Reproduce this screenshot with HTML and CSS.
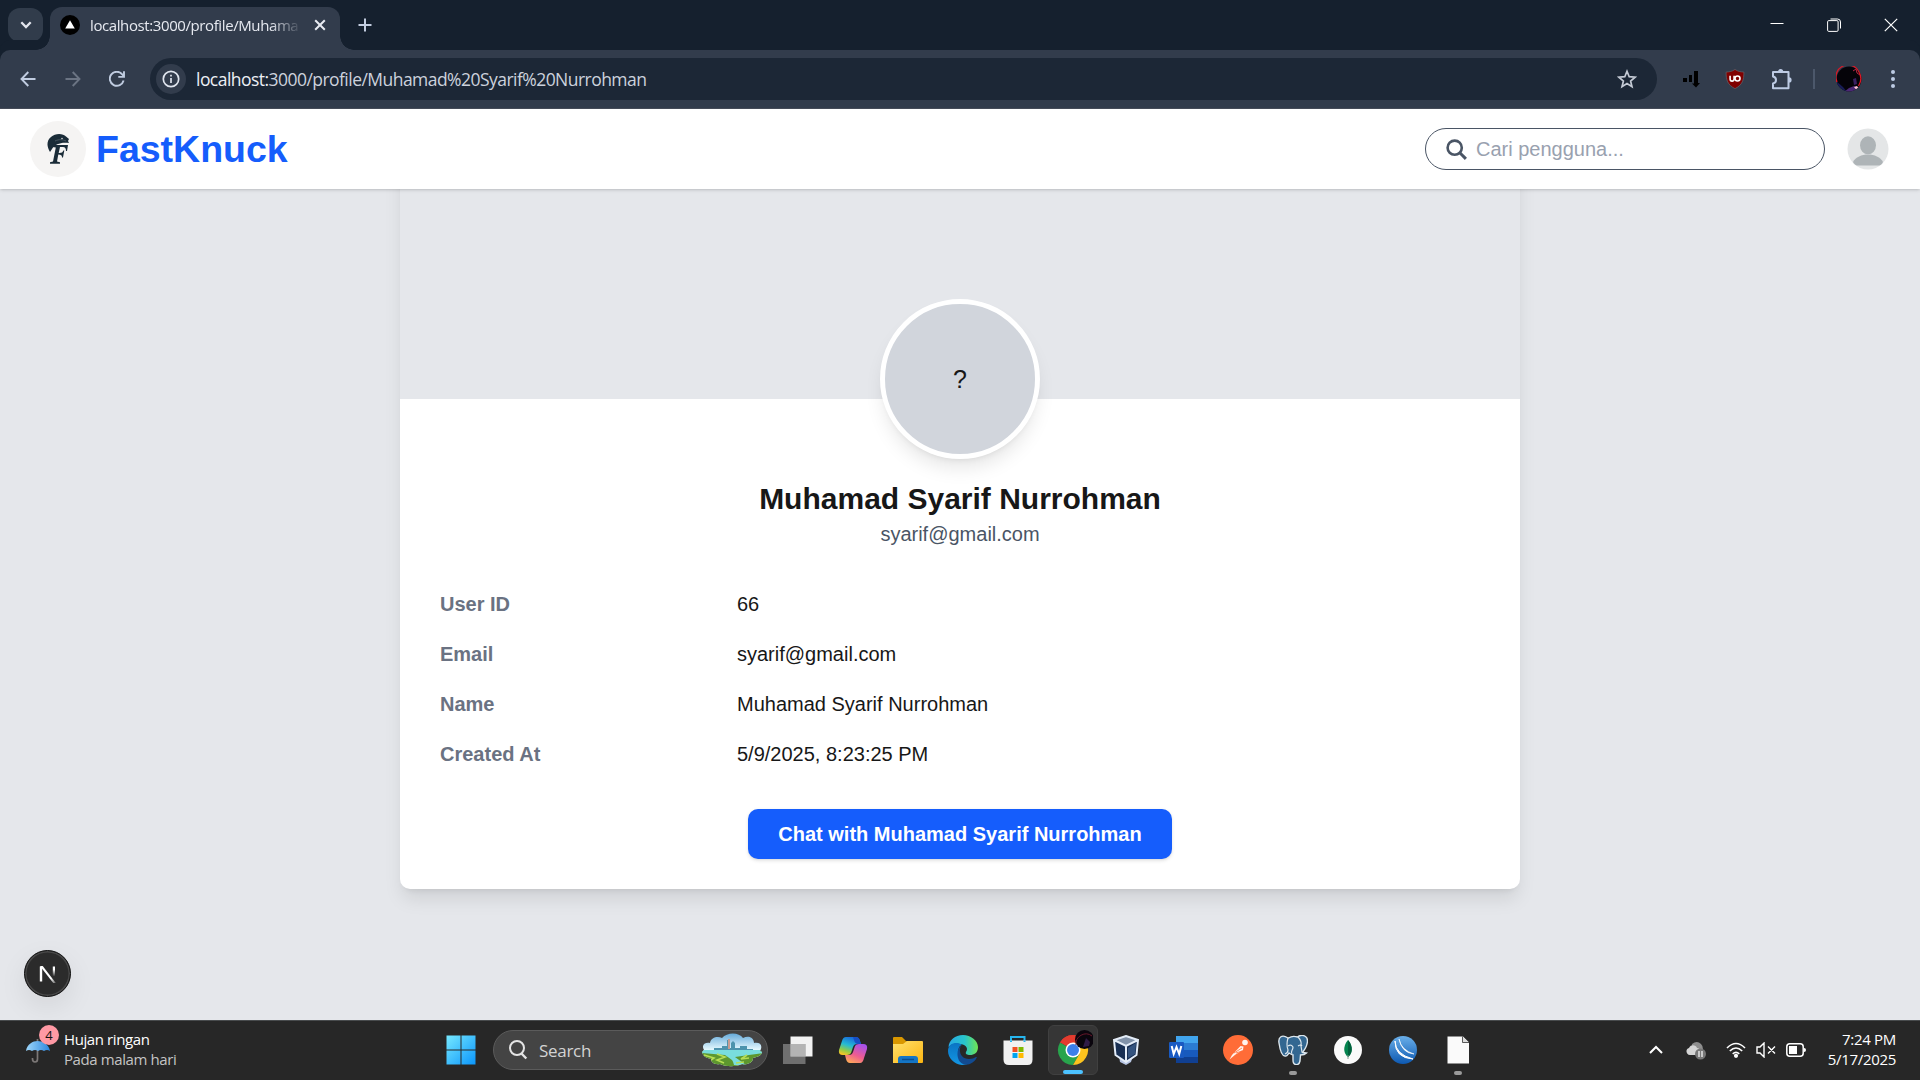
FILE: index.html
```html
<!DOCTYPE html>
<html lang="id">
<head>
<meta charset="utf-8">
<title>FastKnuck</title>
<link rel="stylesheet" href="styles.css">
</head>
<body>
<div class="screen">
  <div class="tabstrip">
    <div class="tab-menu"><svg width="14" height="14" viewBox="0 0 14 14" fill="none" stroke="#e3e6ee" stroke-width="2.3"><path d="M2.3 4.3 7 9l4.700-4.700"/></svg></div>
    <div class="tab">
      <svg class="favicon" width="20" height="20" viewBox="0 0 20 20"><circle cx="10" cy="10" r="10"/><path d="M10 5.200 14.800 13.500H5.200z" fill="#fff"/></svg>
      <span class="tab-title">localhost:3000/profile/Muhama</span>
      <svg width="12" height="12" viewBox="0 0 12 12" stroke="#e8ebf2" stroke-width="2"><path d="m1.200 1.200 9.600 9.600m0-9.600-9.600 9.600"/></svg>
    </div>
    <svg class="new-tab" width="14" height="14" viewBox="0 0 14 14" stroke="#c3cde0" stroke-width="2"><path d="M7 .5v13M.5 7h13"/></svg>
    <div class="window-buttons">
      <svg width="14" height="14" viewBox="0 0 14 14" stroke="#fff"><path d="M.5 5.500h13"/></svg>
      <svg width="14" height="14" viewBox="0 0 14 14" fill="none" stroke="#fff"><path d="M3.500 1h7q3 0 3 3v6.500" /><rect x=".6" y="2.600" width="10.500" height="10.800" rx="1.200"/></svg>
      <svg width="14" height="14" viewBox="0 0 14 14" stroke="#fff" stroke-width="1.200"><path d="m.8.8 12.400 12.400m0-12.400L.8 13.200"/></svg>
    </div>
  </div>
  <div class="toolbar">
    <div class="nav-buttons">
      <svg width="16" height="16" viewBox="0 0 16 16" fill="none" stroke="#c0cce0" stroke-width="1.900"><path d="M15.500 8H2M8.300 1 1.500 8l6.800 7"/></svg>
      <svg width="16" height="16" viewBox="0 0 16 16" fill="none" stroke="#6b7483" stroke-width="1.900"><path d="M.5 8H14M7.700 1l6.800 7-6.800 7"/></svg>
      <svg width="16" height="16" viewBox="0 0 16 16" fill="none" stroke="#c0cce0" stroke-width="1.900"><path d="M14.600 9.500A7 7 0 1 1 13.200 3.300L15 5.500M15 .3v5.600H9.300"/></svg>
    </div>
    <div class="omnibox">
      <div class="site-info"><svg width="18" height="18" viewBox="0 0 18 18" fill="none" stroke="#e0e5ee" stroke-width="1.700"><circle cx="9" cy="9" r="7.700"/><path d="M9 8v5M9 4.700v1.900"/></svg></div>
      <span class="url"><b>localhost:</b>3000/profile/Muhamad%20Syarif%20Nurrohman</span>
      <svg width="20" height="20" viewBox="0 0 20 20" fill="none" stroke="#c4cad5" stroke-width="1.700"><path d="m10 2.300 2.200 5.400 5.900.5-4.500 3.800 1.400 5.700-5-3.100-5 3.100 1.400-5.700-4.500-3.800 5.900-.5z"/></svg>
    </div>
    <div class="extensions">
      <svg width="18" height="18" viewBox="0 0 18 18"><path d="M1 8h4v4H1zM7 5h3v7H7zM12 1h4v12h2l-4 4.500-4-4h2z"/></svg>
      <svg width="20" height="20" viewBox="0 0 20 20"><path d="M10 .4c3 2.200 5.500 2.400 8.900 2.700 0 8-1.300 12.500-8.900 16.600C2.400 15.600 1.100 11.100 1.100 3.100 4.500 2.800 7 2.600 10 .4z" fill="#800000" stroke="#64616a" stroke-width=".7"/><path d="M5.100 6.700v3.200c0 3 4 3 4 0V6.700" fill="none" stroke="#fff" stroke-width="1.600"/><circle cx="12.500" cy="9.500" r="2.500" fill="none" stroke="#fff" stroke-width="1.600"/></svg>
      <svg width="21" height="21" viewBox="0 0 21 21"><path d="M2 3h15.500v16.300H2v-4.800q3-.7 3-3.500T2 7.500z" fill="none" stroke="#bdcbe4" stroke-width="2" stroke-linejoin="round"/><path d="M7 2.700a2.600 2.600 0 0 1 5.200 0zM18 8.300a2.600 2.600 0 0 1 0 5.200z" fill="#bdcbe4"/></svg>
      <i class="divider"></i>
      <svg width="26" height="26" viewBox="0 0 26 26"><defs><clipPath id="pc"><circle cx="13" cy="13" r="12.500"/></clipPath></defs><g clip-path="url(#pc)"><path d="M0 0h26v26H0z" fill="#050309"/><path d="M0 15 7 21l4 5H0z" fill="#171b55"/><path d="m8 26 5-4 5-2 6 2-5 4z" fill="#4b2874"/><path d="m17 13 3-1 1 6-3 1z" fill="#3a2061"/><path d="m18 21 3-1 1.500 2-2 2z" fill="#ffc4d5"/><path d="m17 5 3-2 1 4 3 2" stroke="#b42845" fill="none"/></g><path d="M1 16A12 12 0 0 1 23 6q4 7-.5 14" stroke="#dc1724" stroke-width="1.300" fill="none"/></svg>
      <svg width="6" height="20" viewBox="0 0 6 20" fill="#bdcbe4"><circle cx="3" cy="3" r="2"/><circle cx="3" cy="10" r="2"/><circle cx="3" cy="17" r="2"/></svg>
    </div>
  </div>

  <div class="page">
    <header class="site-header">
      <div class="brand">
        <svg width="56" height="56" viewBox="0 0 56 56"><circle cx="28" cy="28" r="28" fill="#f5f4f3"/><path d="M20 31c-3-5-4-11 1-15 4-4 12-4 15-.5l3 2.500-1 2 1 2c-8-1-14 1-17 6z" fill="#1a2c38"/><path d="M25 20c4-2 8-1.500 11 0" fill="none" stroke="#53616a" stroke-width=".8"/><circle cx="32" cy="17.500" r=".7" fill="#fff"/><path d="M23 24h15l-1 6h-1q0-4-3-4h-3l-1.300 6q4 .3 4.600-2.500h1l-1.300 7h-1q.3-3-3.700-3l-1.300 7 3 .7v1.500H20v-1.500l3-.7 2.800-14-3-.5z" fill="#1a2c38"/></svg>
        <span class="brand-name">FastKnuck</span>
      </div>
      <div class="header-tools">
        <div class="search"><svg width="21" height="21" viewBox="0 0 21 21" fill="none" stroke="#4a5565"><circle cx="8.700" cy="8.700" r="7.100" stroke-width="2.600"/><path d="m13.800 13.800 6.100 6.100" stroke-width="3"/></svg><span>Cari pengguna...</span></div>
        <svg width="42" height="42" viewBox="0 0 42 42"><circle cx="21" cy="21" r="20.500" fill="#e4e6e7"/><ellipse cx="21" cy="17.300" rx="8" ry="9" fill="#aeb4b7"/><path d="M6 34c5-10 25-10 30 0-1 2.500-3 3.500-4 3.500H10C8 37 7 36 6 34z" fill="#aeb4b7"/></svg>
      </div>
    </header>
    <main class="card">
      <div class="cover"></div>
      <div class="avatar">?</div>
      <h1 class="name">Muhamad Syarif Nurrohman</h1>
      <p class="email">syarif@gmail.com</p>
      <dl class="details">
        <dt>User ID</dt><dd>66</dd>
        <dt>Email</dt><dd>syarif@gmail.com</dd>
        <dt>Name</dt><dd>Muhamad Syarif Nurrohman</dd>
        <dt>Created At</dt><dd>5/9/2025, 8:23:25 PM</dd>
      </dl>
      <button class="chat">Chat with Muhamad Syarif Nurrohman</button>
    </main>
    <div class="dev-badge"><svg width="18" height="18" viewBox="0 0 18 18"><defs><linearGradient id="n1" x1="0" y1="0" x2="0" y2="1"><stop offset=".3" stop-color="#fff"/><stop offset="1" stop-color="#fff" stop-opacity="0"/></linearGradient><linearGradient id="n2" x1="0" y1="0" x2="1" y2="1"><stop offset=".7" stop-color="#fff"/><stop offset="1" stop-color="#fff" stop-opacity=".2"/></linearGradient></defs><path d="M2 1.500v15" stroke="#fff" stroke-width="2.400"/><path d="M1 1h2.700l13.100 17-1.900.8L2.500 3z" fill="url(#n2)"/><path d="M13.800 1.500h2.200v10h-2.200z" fill="url(#n1)"/></svg></div>
  </div>

  <div class="taskbar">
    <div class="weather">
      <div class="weather-icon">
        <svg width="26" height="26" viewBox="0 0 26 26"><defs><linearGradient id="um"><stop stop-color="#9ed7fb"/><stop offset="1" stop-color="#2c86de"/></linearGradient></defs><path d="M12.500 1v20q0 3-2.500 3t-2.500-3v-1" fill="none" stroke="#7c7877" stroke-width="1.700"/><path d="M1 13C2 6 8 3 12.500 3S24 6 25 13q-3-2-6 0-3-2-6 0-3-2-6 0-3-2-6 0z" fill="url(#um)"/></svg>
        <span class="badge">4</span>
      </div>
      <div class="weather-text"><span>Hujan ringan</span><span class="dim">Pada malam hari</span></div>
    </div>
    <div class="apps">
      <div class="app"><svg width="30" height="30" viewBox="0 0 30 30"><defs><linearGradient id="w" gradientUnits="userSpaceOnUse" x2="30" y2="30"><stop stop-color="#78eaff"/><stop offset="1" stop-color="#0994fb"/></linearGradient></defs><path d="M.5.5h14v14H.5zM15.500.5h14v14h-14zM.5 15.500h14v14H.5zM15.500 15.500h14v14h-14z" fill="url(#w)"/></svg></div>
      <div class="task-search">
        <svg width="20" height="20" viewBox="0 0 20 20" fill="none" stroke="#e5e5e5" stroke-width="2"><circle cx="9" cy="8" r="7"/><path d="m13 13 5.300 5.500" stroke-width="2.400"/></svg>
        <span>Search</span>
        <svg class="scene" width="62" height="34" viewBox="0 0 62 34"><defs><clipPath id="sc"><path d="M3 17C0 12 4 9 9 10 10 4 17 3 21 5c5-6 17-6 21 0 6-3 11 0 11 5 7-1 9 3 6 8l2 1c0 3-4 5-9 6 0 5-6 7-11 6-6 3-16 3-22 0-6 1-9-2-9-5-5-1-8-3-9-7z"/></clipPath><linearGradient id="sky" x2="0" y2="1"><stop stop-color="#62a8d8"/><stop offset=".5" stop-color="#e8faff"/></linearGradient></defs><g clip-path="url(#sc)"><path d="M0 0h62v34H0z" fill="url(#sky)"/><path d="M13 18v-3h8v-2h5V7h2v8h2v-5l2-2 2 2v5h5v-2h7v3h6v3z" fill="#4d93ad"/><path d="M27 6h2v10h-2z" fill="#c59b91"/><path d="M0 18h62v16H0z" fill="#5d972e"/><path d="M0 17h62v3L48 22l-14 2 11 8H33q-1-4-2-5l-7-5-24-2z" fill="#79dddd"/><path d="m3 22 10 3-3 2m6-6 8 3-8 3 7 3m23-8-6 4 8-1m-5 4-8 1" stroke="#b5dd54" fill="none" stroke-width="1.600"/></g></svg>
      </div>
      <div class="app"><svg width="32" height="30" viewBox="0 0 32 30"><path d="M8.500 1.500h22v20h-22z" fill="#f2f2f2"/><path d="M1 9h22.500v20H1z" fill="#888" opacity=".75"/><path d="M8.500 9h15v12.500h-15z" fill="#b4b4b4"/></svg></div>
      <div class="app"><svg width="30" height="30" viewBox="0 0 30 30"><defs><linearGradient id="c1" x1=".6" x2=".2" y2="1"><stop stop-color="#1867dc"/><stop offset=".45" stop-color="#25bbd4"/><stop offset=".75" stop-color="#91cc48"/><stop offset="1" stop-color="#ffc524"/></linearGradient><linearGradient id="c2" x1=".7" x2=".2" y2="1"><stop stop-color="#a651ea"/><stop offset=".55" stop-color="#ee5c91"/><stop offset="1" stop-color="#ffac56"/></linearGradient></defs><path d="M8 2h10q3 0 4 4l1 3h-4q-3 0-4 3l-2 6q-1 2-4 2H5q-5 0-4-5L4 6q1-4 4-4z" fill="url(#c1)"/><path d="M22 28H12q-3 0-4-4l-1-4h4q3 0 4-3l2-6q1-2 4-2h4q5 0 4 5l-3 9q-1 5-4 5z" fill="url(#c2)"/><path d="M15 2h3q3 0 4 4l1 3h-3q-3 0-4-4z" fill="#174fc5"/></svg></div>
      <div class="app"><svg width="30" height="30" viewBox="0 0 30 30"><defs><linearGradient id="f" x2="1" y2="1"><stop stop-color="#ffe16d"/><stop offset="1" stop-color="#fcb511"/></linearGradient></defs><path d="M0 3q0-1 1-1h8l4 4h6v6H0z" fill="#d99700"/><path d="M0 9h10l4-3h15q1 0 1 1v20q0 1-1 1H0z" fill="url(#f)"/><path d="M5 28v-4q0-3 3-3h14q3 0 3 3v4z" fill="#1475c5"/><path d="M9 24.500h12" stroke="#084d91" stroke-width="1.500"/></svg></div>
      <div class="app"><svg width="30" height="30" viewBox="0 0 30 30"><defs><linearGradient id="e1"><stop stop-color="#28a9e5"/><stop offset=".55" stop-color="#28c4cb"/><stop offset="1" stop-color="#70e552"/></linearGradient><linearGradient id="e2" x2="0" y2="1"><stop stop-color="#0a74c4"/><stop offset="1" stop-color="#1397e4"/></linearGradient></defs><path d="M.5 12C1 5 7 0 15 0s15 6 15 12c0 6-4 8-8 8-3 0-5-1-4-3 3-4-1-8-6-8-5-1-9 0-11.500 3z" fill="url(#e1)"/><path d="M0 16C0 8 9 6 14 10c-4 1-5 7-2 12 2 4 7 5 11 4-3 3-6 4-9 4C6 29 0 23 0 16z" fill="url(#e2)"/><path d="M13 11c-3 5 0 13 8 13 3 0 5-1 7-2 1 0 1 0 .5 1C26 28 20 31 15 29 8 26 8 14 13 11z" fill="#124b91"/></svg></div>
      <div class="app"><svg width="30" height="30" viewBox="0 0 30 30"><path d="M8 6.500V2h13.500v4.500" fill="none" stroke="#26b6ee" stroke-width="2"/><path d="M.5 5.500h29v19q0 5.500-5 5.500H6q-5.500 0-5.500-5.500z" fill="#f1f1f1"/><path d="M8 5.500V7M21.500 5.500V7" stroke="#26b6ee" stroke-width="2"/><path d="M9.500 12h5v5h-5z" fill="#f25022"/><path d="M15.500 12h5v5h-5z" fill="#7fba00"/><path d="M9.500 18h5v5h-5z" fill="#00a4ef"/><path d="M15.500 18h5v5h-5z" fill="#ffb900"/></svg></div>
      <div class="app active"><svg width="40" height="40" viewBox="0 0 40 40"><path d="M20 20 7 12.500A15 15 0 0 1 33 12.500z" fill="#e33b2e"/><path d="M20 20 7 12.500A15 15 0 0 0 20 35l6.500-11z" fill="#28a44c"/><path d="M20 20l6.500 3.800L20 35a15 15 0 0 0 13-22.500H20z" fill="#fcc31e"/><path d="M7 12.500A15 15 0 0 1 33 12.500H20z" fill="#e33b2e"/><circle cx="20" cy="20" r="7.500" fill="#fff"/><circle cx="20" cy="20" r="6" fill="#3c7fe9"/><circle cx="31.500" cy="9.500" r="9.500" fill="#0a050d"/><path d="M23 15a10 10 0 0 1 16-9" stroke="#68172a" fill="none"/><path d="m30 17 3-9 4 4-1 4z" fill="#2f1b46"/></svg></div>
      <div class="app vm"><svg width="30" height="30" viewBox="0 0 30 30"><path d="m8 21 7-2 7 2-2 6-5 3-6-3z" fill="#b6c4e2"/><path d="M3 5 15 1l12 4-1.500 15L15 27 4.500 20z" fill="#182f53"/><path d="m3 5 12-4 12 4-12 6z" fill="#8293aa"/><path d="m3 5 12 6 12-6M15 11v16M3 5l1.500 15L15 27l10.500-7L27 5 15 1z" fill="none" stroke="#e4edf8" stroke-width="2"/><path d="m17 13 8-5-1 11-7 4z" fill="#35547f"/></svg></div>
      <div class="app"><svg width="30" height="30" viewBox="0 0 30 30"><path d="M8 1h22v7H8z" fill="#41a5ee"/><path d="M8 8h22v7H8z" fill="#2b7cd3"/><path d="M8 15h22v7H8z" fill="#185abd"/><path d="M8 22h22v6H8z" fill="#103f91"/><rect x="1" y="7" width="15" height="16" rx="1" fill="#195ac2"/><path d="m3.700 11 2 8 2.800-7 2.700 7 2.100-8" fill="none" stroke="#fff" stroke-width="2"/></svg></div>
      <div class="app"><svg width="30" height="30" viewBox="0 0 30 30"><circle cx="15" cy="15" r="15" fill="#ff6c37"/><circle cx="22" cy="7.500" r="2.800" fill="#fff3ed"/><path d="m6.500 24.500 2.500-4.500 8.500-9 3 .500-.5 3.500-7.500 4.500z" fill="#fff3ed"/><path d="m11 18 8-5m-6 5 6-2" stroke="#ff6c37" stroke-width=".8"/></svg></div>
      <div class="app running"><svg width="30" height="30" viewBox="0 0 30 30"><path d="M10 3C4-1 0 2 1 8c1 7 3 13 6 13 2 1 3-2 4-3q3 2 4 2v5c0 6 6 6 7 1l.500-6q4 0 6-2l-4-.500c6-8 6-14 3-16-3-2-6-1-8 .500-3-1-6-1-9 1z" fill="#336791" stroke="#dce6ed" stroke-width="1.400"/><path d="M10 3q-2 7 0 12 0 3-3 4M10 11q3-2 5 1c0 4-3 4-1 7M20 2q4 4 3 9l1 6M20 11q3-2 4 0" fill="none" stroke="#dce6ed" stroke-width="1.200"/></svg></div>
      <div class="app"><svg width="30" height="30" viewBox="0 0 30 30"><circle cx="15" cy="15" r="14" fill="#fafafa"/><path d="M15 5c6 7 4 14 0 17-4-3-6-10 0-17z" fill="#04844f"/><path d="M15 5c6 7 4 14 0 17z" fill="#02613d"/><path d="M15 20v4" stroke="#829b90"/></svg></div>
      <div class="app"><svg width="30" height="30" viewBox="0 0 30 30"><defs><linearGradient id="m" x2="0" y2="1"><stop stop-color="#6aafe9"/><stop offset="1" stop-color="#0d59b2"/></linearGradient></defs><circle cx="15" cy="15" r="14" fill="url(#m)"/><path d="M7 6q0 13 18 18-18-1-18-18z" fill="#fff" stroke="#fff"/><path d="M11 4q2 11 15 15-12-1-15-15z" fill="#fff" stroke="#fff" stroke-width=".6"/></svg></div>
      <div class="app running"><svg width="30" height="30" viewBox="0 0 30 30"><path d="M4.500 1.500H20l6 6v21H4.500z" fill="#fafafa"/><path d="M19.500 1.500v6H26" fill="#ddd" stroke="#333" stroke-width=".8"/></svg></div>
    </div>
    <div class="tray">
      <svg width="14" height="10" viewBox="0 0 14 10" fill="none" stroke="#fff" stroke-width="2"><path d="m1 8 6-6 6 6"/></svg>
      <svg class="cloud" width="20" height="18" viewBox="0 0 20 18"><path d="M6 2q5-4 9 0 3 3 1 8H5z" fill="#8e8e8e"/><path d="M4 13C0 13-1 7 3 6c2-4 7-3 8 0 4 0 4 7 0 7z" fill="#d5d5d5"/><circle cx="14.500" cy="12" r="5.500" fill="#777"/><path d="M13 9v6m3-6v6" stroke="#fff" stroke-width="1.200"/></svg>
      <svg width="20" height="16" viewBox="0 0 20 16" fill="none" stroke="#fff" stroke-width="1.600"><path d="M1 6q9-9 18 0M3.800 9q6.200-6 12.400 0M6.700 11.800q3.300-3 6.600 0"/><circle cx="10" cy="13.800" r="1.300" fill="#fff"/></svg>
      <svg width="20" height="16" viewBox="0 0 20 16" fill="none" stroke="#fff" stroke-width="1.400"><path d="M1 5h3l4-4v14l-4-4H1zM12 4.500l7 7m0-7-7 7"/></svg>
      <svg width="20" height="14" viewBox="0 0 20 14"><rect x=".8" y=".8" width="16.400" height="12.400" rx="3" fill="none" stroke="#fff" stroke-width="1.500"/><path d="M3 3h8v8H3zM18 5q2 0 2 2t-2 2z" fill="#fff"/></svg>
      <div class="clock"><span>7:24 PM</span><span>5/17/2025</span></div>
    </div>
  </div>
</div>
</body>
</html>
```
FILE: styles.css
```css
* { box-sizing: border-box; }
body { margin: 0; font-family: "Liberation Sans", Arial, sans-serif; }
svg { display: block; flex: none; }
.screen { width: 1920px; height: 1080px; display: flex; flex-direction: column; overflow: hidden; }

.tabstrip { height: 50px; display: flex; align-items: center; background: #15202e; padding-left: 8px; font-family: "Open Sans", sans-serif; }
.tab-menu { width: 35px; height: 34px; margin-right: 7px; border-radius: 12px; background: #313c4b; display: flex; align-items: center; justify-content: center; }
.tab { position: relative; align-self: flex-end; width: 290px; height: 43px; border-radius: 12px 12px 0 0; background: #323c4c; display: flex; align-items: center; padding: 0 14px 7px 10px; }
.tab::before, .tab::after { content: ""; position: absolute; bottom: 0; width: 14px; height: 14px; }
.tab::before { left: -14px; background: radial-gradient(circle at 0 0, transparent 13.500px, #323c4c 14px); }
.tab::after { right: -14px; background: radial-gradient(circle at 100% 0, transparent 13.500px, #323c4c 14px); }
.favicon { margin-right: 10px; }
.tab-title { width: 212px; margin-right: auto; white-space: nowrap; font-size: 15px; letter-spacing: -0.400px; line-height: 22px; color: #e6e9f0; -webkit-mask-image: linear-gradient(90deg, #000 180px, transparent 212px); mask-image: linear-gradient(90deg, #000 180px, transparent 212px); }
.new-tab { margin-left: 18px; }
.window-buttons { margin-left: auto; display: flex; gap: 43px; padding-right: 22px; }

.toolbar { height: 59px; display: flex; align-items: center; background: #323c4c; border-bottom: 1px solid #454b58; box-shadow: 0 -10px 0 #15202e; border-radius: 10px 10px 0 0; padding-left: 20px; font-family: "Open Sans", sans-serif; }
.nav-buttons { display: flex; gap: 28.500px; width: 130px; }
.omnibox { width: 1507px; height: 42px; border-radius: 21px; background: #1c2736; display: flex; align-items: center; padding: 0 20px 0 6px; }
.site-info { width: 30px; height: 30px; border-radius: 50%; background: #323c4c; display: flex; align-items: center; justify-content: center; margin-right: 10px; }
.url { margin-right: auto; font-size: 17.500px; letter-spacing: -0.540px; color: #ccd2dd; white-space: nowrap; }
.url b { font-weight: 400; color: #eceff5; }
.extensions { display: flex; align-items: center; padding-left: 25px; }
.extensions svg:nth-child(2) { margin-left: 25px; }
.extensions svg:nth-child(3) { margin-left: 26px; }
.divider { width: 2px; height: 20px; background: #4c586b; margin: 0 21px 0 21px; }
.extensions svg:last-child { margin-left: 28px; }

.page { position: relative; height: 911px; background: #e5e7eb; overflow: hidden; }
.site-header { position: relative; z-index: 1; height: 80px; background: #fff; box-shadow: 0 1.250px 3.750px rgba(0,0,0,.13), 0 1.250px 2.500px -1.250px rgba(0,0,0,.15); display: flex; align-items: center; justify-content: space-between; padding: 0 31px 0 30px; }
.brand, .header-tools { display: flex; align-items: center; }
.brand { gap: 10px; }
.brand-name { font-size: 37.500px; font-weight: 700; line-height: 45px; color: #155dfc; }
.header-tools { gap: 22px; }
.search { width: 400px; height: 42px; border: 1px solid #4a5565; border-radius: 21px; display: flex; align-items: center; gap: 9px; padding-left: 20px; font-size: 20px; color: #99a1af; }
.card { width: 1120px; height: 740px; margin: -40px auto 0; background: #fff; border-radius: 10px; box-shadow: 0 12.500px 18.750px -3.750px rgba(0,0,0,.1), 0 5px 7.500px -5px rgba(0,0,0,.1); display: flex; flex-direction: column; align-items: center; }
.cover { width: 100%; height: 250px; background: #e5e7eb; flex: none; }
.avatar { z-index: 0; flex: none; width: 160px; height: 160px; margin-top: -100px; border: 5px solid #fff; border-radius: 50%; background: #d1d5dc; box-shadow: 0 12.500px 18.750px -3.750px rgba(0,0,0,.1), 0 5px 7.500px -5px rgba(0,0,0,.1); display: flex; align-items: center; justify-content: center; font-size: 25px; color: #171717; }
.name { margin: 20px 0 0; font-size: 30px; line-height: 40px; color: #171717; }
.email { margin: 0; font-size: 20px; line-height: 30px; color: #4a5565; }
.details { width: 1040px; margin: 40px 0 0; display: grid; grid-template-columns: 297px 1fr; row-gap: 20px; font-size: 20px; line-height: 30px; }
.details dt { font-weight: 700; color: #6a7282; }
.details dd { margin: 0; color: #171717; }
.chat { width: 424px; height: 50px; margin-top: 40px; border: 0; border-radius: 10px; background: #155dfc; box-shadow: 0 1.250px 3.750px rgba(0,0,0,.1), 0 1.250px 2.500px -1.250px rgba(0,0,0,.1); color: #fff; font: 700 20px "Liberation Sans", Arial, sans-serif; white-space: nowrap; }
.dev-badge { position: absolute; left: 24px; top: 841px; width: 47px; height: 47px; border-radius: 50%; background: #2b2b2b; border: 1px solid #111; box-shadow: inset 0 0 0 1.500px #484848, 0 10px 28px rgba(0,0,0,.08); display: flex; align-items: center; justify-content: center; }

.taskbar { height: 60px; display: flex; background: #272727; border-top: 1px solid #484b4d; padding-bottom: 1px; font-family: "Open Sans", sans-serif; font-size: 15px; color: #fff; }
.weather { width: 436px; display: flex; align-items: center; padding-left: 25px; }
.weather-icon { position: relative; width: 39px; padding-top: 2px; }
.badge { position: absolute; left: 14px; top: -11px; width: 20px; height: 20px; border-radius: 50%; background: #ff99a4; color: #111; font-size: 13px; line-height: 20px; text-align: center; }
.weather-text { display: flex; flex-direction: column; padding-bottom: 3px; line-height: 20px; letter-spacing: -0.400px; }
.dim { color: #c4c4c4; }
.apps { display: flex; align-items: center; gap: 5px; }
.app { position: relative; width: 50px; height: 50px; border-radius: 6px; display: flex; align-items: center; justify-content: center; }
.app.active { background: #363636; border: 1px solid #404040; }
.app.vm { padding-right: 4px; }
.active::after, .running::after { content: ""; position: absolute; bottom: 0; height: 4px; border-radius: 2px; }
.active::after { width: 20px; background: #4cc2ff; }
.running::after { width: 8px; background: #9a9a9a; }
.task-search { width: 275px; height: 40px; margin-left: 2px; border-radius: 20px; background: #444; border: 1px solid #5b5b5b; display: flex; align-items: center; padding: 0 4px 0 14px; font-size: 17px; letter-spacing: -0.300px; color: #d3d3d3; }
.task-search span { margin: 0 auto 0 11px; }
.tray { margin-left: auto; display: flex; align-items: center; padding-right: 24px; }
.cloud { margin: 2px 20px 0 23px; }
.tray svg:nth-child(4), .tray svg:nth-child(5) { margin-left: 10px; }
.clock { width: 90px; display: flex; flex-direction: column; padding-bottom: 3px; text-align: right; line-height: 20px; letter-spacing: -0.300px; white-space: nowrap; }
```
